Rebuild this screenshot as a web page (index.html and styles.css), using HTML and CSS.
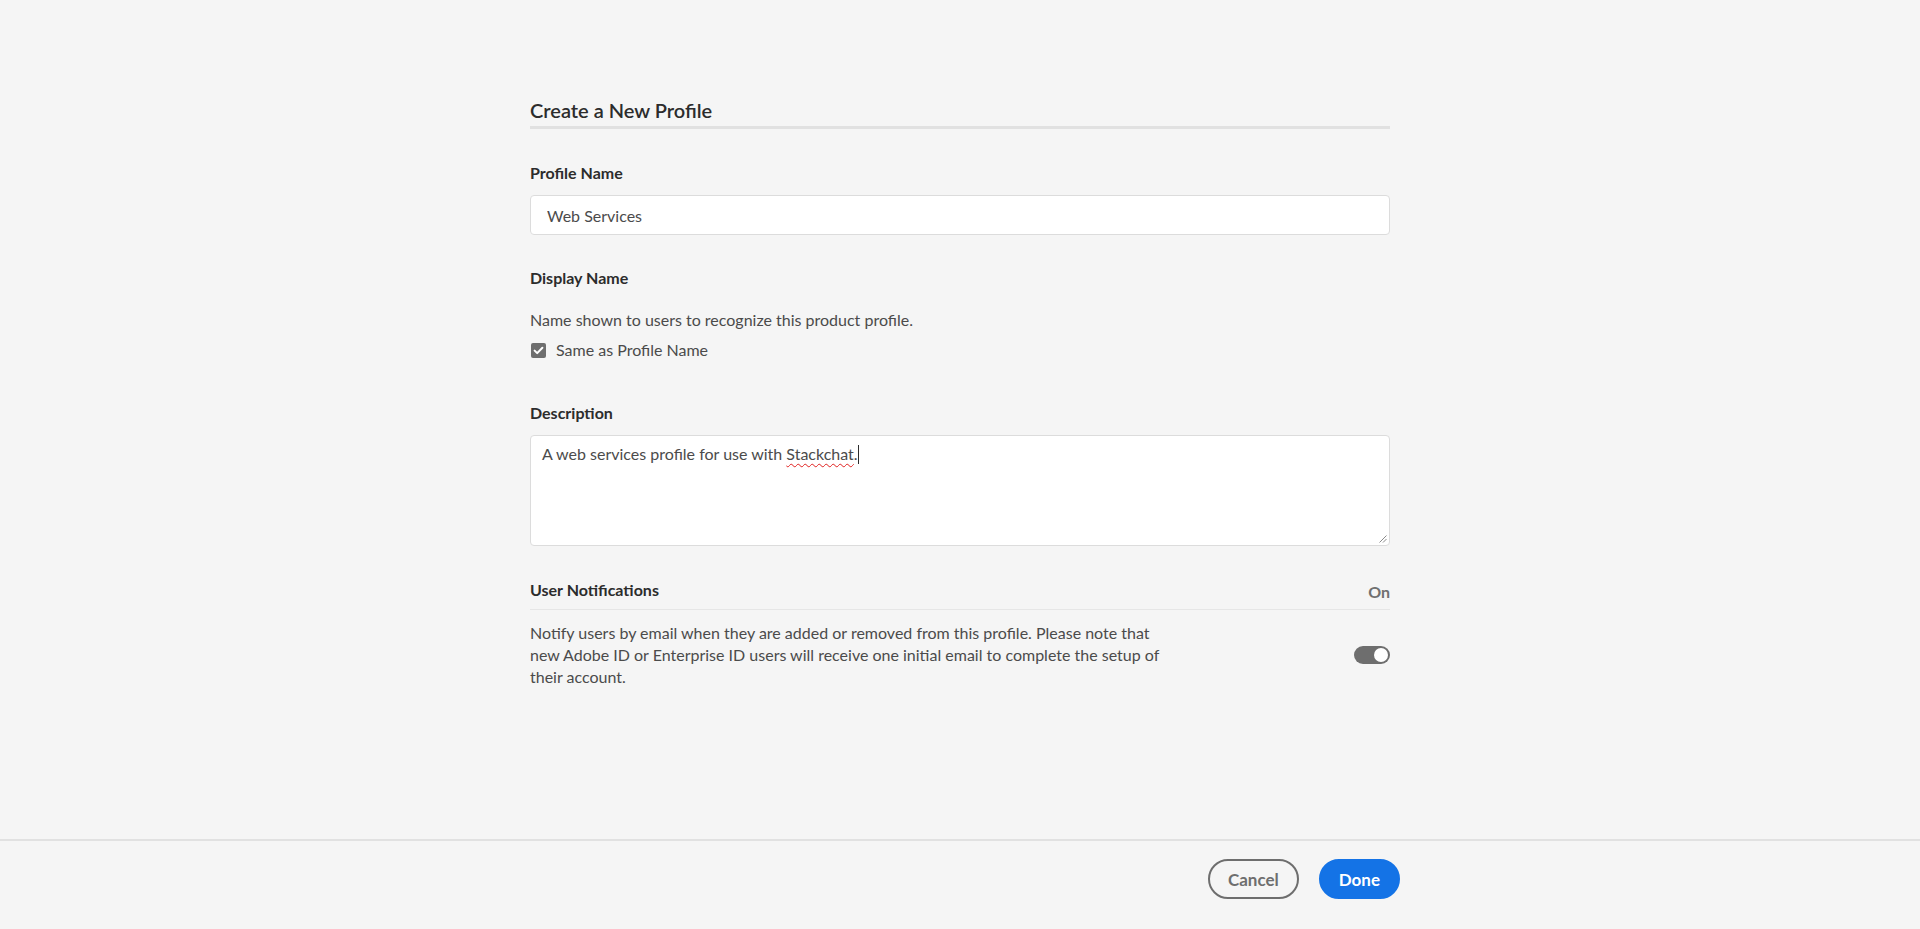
FILE: index.html
```html
<!DOCTYPE html>
<html lang="en">
  <head>
    <meta charset="UTF-8" />
    <title>Create a New Profile</title>
    <link rel="stylesheet" href="styles.css">
  </head>
  <body>
    <div class="page">
      <main class="form">
        <h1 class="title">Create a New Profile</h1>

        <section class="field field-first">
          <label class="field-label" for="profile-name">Profile Name</label>
          <input class="textfield" id="profile-name" type="text" value="Web Services" />
        </section>

        <section class="field">
          <div class="field-label">Display Name</div>
          <p class="hint">Name shown to users to recognize this product profile.</p>
          <div class="checkbox-row">
            <span class="checkbox">
              <svg width="15" height="15" viewBox="0 0 15 15">
                <path d="M3.6 7.6 L6.2 10.1 L11.4 4.7" fill="none" stroke="#fff" stroke-width="2" stroke-linecap="round" stroke-linejoin="round" />
              </svg>
            </span>
            <span class="checkbox-label">Same as Profile Name</span>
          </div>
        </section>

        <section class="field field-desc">
          <div class="field-label">Description</div>
          <div class="textarea">
            A web services profile for use with <span class="misspelled">Stackchat</span>.<span class="caret"></span>
            <svg class="grip" width="9" height="9" viewBox="0 0 9 9">
              <path d="M8.5 1.5 L1.5 8.5 M8.5 5 L5 8.5" stroke="#8a8a8a" stroke-width="1" />
            </svg>
          </div>
        </section>

        <section class="field">
          <div class="notify-head">
            <div class="field-label">User Notifications</div>
            <div class="status">On</div>
          </div>
          <div class="notify-body">
            <p class="notify-text">Notify users by email when they are added or removed from this profile. Please note that new Adobe ID or Enterprise ID users will receive one initial email to complete the setup of their account.</p>
            <span class="switch"><span class="switch-knob"></span></span>
          </div>
        </section>
      </main>

      <footer class="footer">
        <div class="footer-inner">
          <button class="btn btn-secondary">Cancel</button>
          <button class="btn btn-cta">Done</button>
        </div>
      </footer>
    </div>
  </body>
</html>
```

FILE: styles.css
```css
body {
  margin: 0;
  background-color: #f5f5f5;
  font-family: Lato, "Liberation Sans", sans-serif;
  color: #4b4b4b;
}

.page {
  min-height: 100vh;
  display: flex;
  flex-direction: column;
}

.form {
  flex: 1;
  width: 860px;
  margin: 0 auto;
  padding-top: 98px;
}

.title {
  margin: 0;
  padding-bottom: 4px;
  border-bottom: 3px solid #e1e1e1;
  font-size: 20px;
  line-height: 24px;
  font-weight: 600;
  color: #2c2c2c;
}

.field {
  margin-top: 33px;
}

.field-first {
  margin-top: 34px;
}

.field-desc {
  margin-top: 42px;
}

.field-label {
  display: block;
  font-size: 16px;
  line-height: 20px;
  font-weight: 700;
  color: #2c2c2c;
  margin-bottom: 12px;
}

.textfield {
  display: block;
  box-sizing: border-box;
  width: 100%;
  height: 40px;
  margin: 0;
  padding: 0 16px;
  border: 1px solid #dcdcdc;
  border-radius: 4px;
  background: #fff;
  font-family: inherit;
  font-size: 16px;
  color: #4b4b4b;
  outline: none;
}

.hint {
  margin: 21px 0 0;
  font-size: 16px;
  line-height: 22px;
}

.checkbox-row {
  display: flex;
  align-items: center;
  gap: 10px;
  margin-top: 8px;
  font-size: 16px;
  line-height: 22px;
}

.checkbox {
  display: flex;
  width: 15px;
  height: 15px;
  border-radius: 2px;
  background-color: #6e6e6e;
  margin-left: 1px;
}

.textarea {
  position: relative;
  box-sizing: border-box;
  height: 111px;
  padding: 7px 11px;
  border: 1px solid #dcdcdc;
  border-radius: 4px;
  background: #fff;
  font-size: 16px;
  line-height: 22px;
  color: #4b4b4b;
}

.misspelled {
  text-decoration: underline wavy #e0201f;
  text-decoration-thickness: 1px;
  text-underline-offset: 3px;
}

.caret {
  display: inline-block;
  width: 1px;
  height: 19px;
  background-color: #2c2c2c;
  vertical-align: -4px;
}

.grip {
  position: absolute;
  right: 2px;
  bottom: 2px;
}

.notify-head {
  display: flex;
  justify-content: space-between;
  align-items: center;
  padding-bottom: 8px;
  border-bottom: 1px solid #e6e6e6;
}

.notify-head .field-label {
  margin-bottom: 0;
}

.status {
  font-size: 16px;
  font-weight: 700;
  color: #707070;
  padding-top: 3px;
}

.notify-body {
  display: flex;
  justify-content: space-between;
  align-items: center;
  margin-top: 12px;
}

.notify-text {
  margin: 0;
  max-width: 648px;
  font-size: 16px;
  line-height: 22px;
}

.switch {
  display: flex;
  justify-content: flex-end;
  align-items: center;
  box-sizing: border-box;
  width: 36px;
  height: 18px;
  padding: 0 2px;
  border-radius: 9px;
  background-color: #6e6e6e;
}

.switch-knob {
  width: 14px;
  height: 14px;
  border-radius: 50%;
  background-color: #fff;
}

.footer {
  border-top: 2px solid #e1e1e1;
  padding: 18px 0 30px;
}

.footer-inner {
  width: 880px;
  margin: 0 auto;
  display: flex;
  justify-content: flex-end;
  gap: 20px;
}

.btn {
  box-sizing: border-box;
  height: 40px;
  padding: 0 18px;
  border-radius: 20px;
  border: 2px solid transparent;
  font-family: inherit;
  font-size: 17px;
  font-weight: 700;
  cursor: pointer;
}

.btn-secondary {
  background: transparent;
  border-color: #6e6e6e;
  color: #6e6e6e;
}

.btn-cta {
  background-color: #1473e6;
  border-color: #1473e6;
  color: #fff;
}
```
